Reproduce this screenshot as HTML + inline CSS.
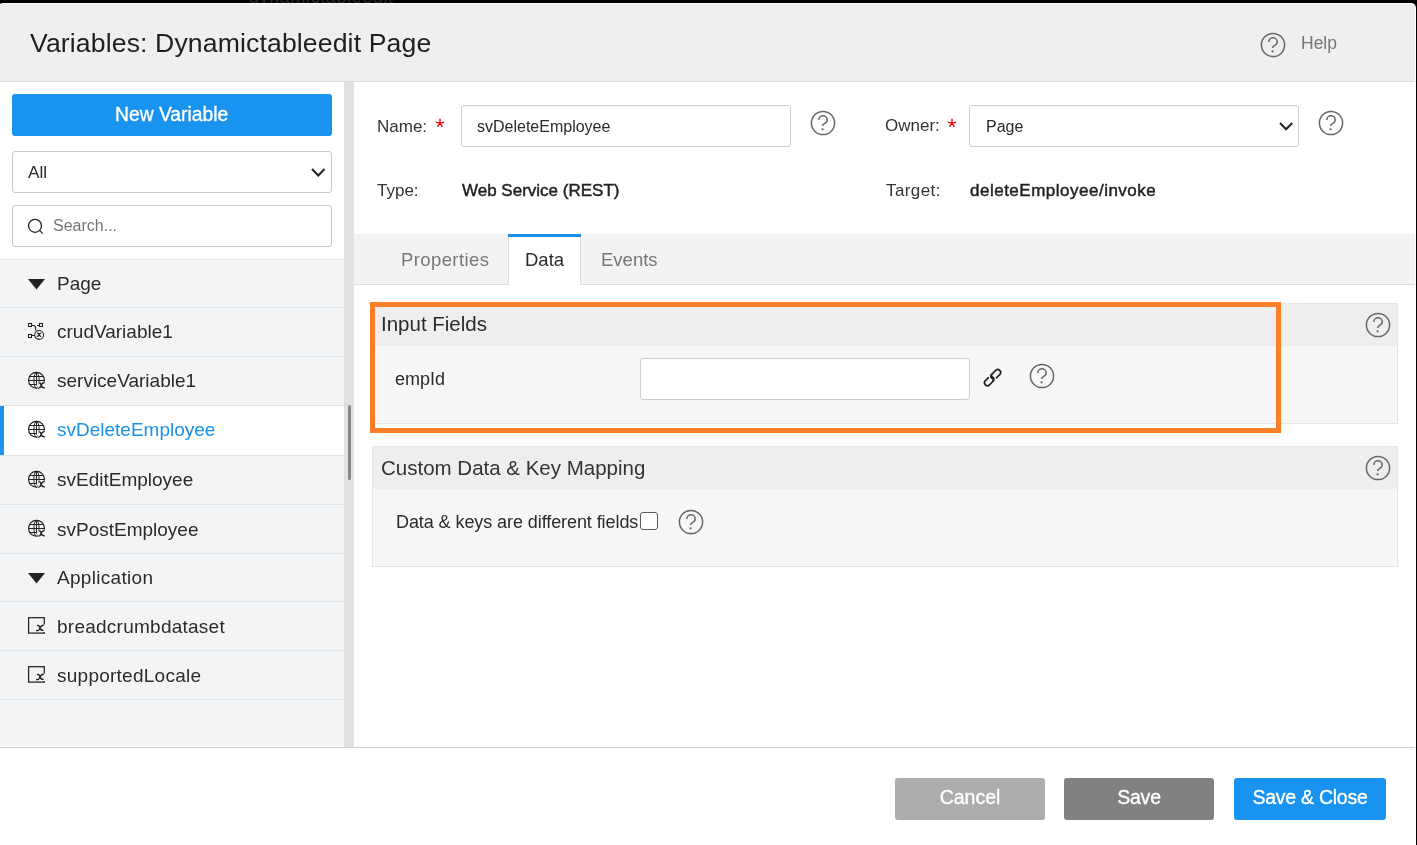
<!DOCTYPE html>
<html><head><meta charset="utf-8">
<style>
*{box-sizing:border-box;margin:0;padding:0}
html,body{width:1417px;height:845px;overflow:hidden;background:#000;font-family:"Liberation Sans",sans-serif;color:#333;-webkit-font-smoothing:antialiased}
.a{position:absolute}
.t{position:absolute;white-space:nowrap;line-height:1;will-change:transform}
.btn{position:absolute;border-radius:3px;color:#fff;text-align:center;line-height:1}
</style></head><body>
<div class="t" style="left:249px;top:-12px;font-size:18px;letter-spacing:0.6px;color:#2a2a2a">dynamictableedit</div>
<div class="a" style="left:-2px;top:3px;width:1418px;height:860px;background:#fff;border-radius:5px"></div>
<div class="a" style="left:-1px;top:4px;width:1416px;height:77px;background:#efefef;border-radius:4px 4px 0 0"></div>
<div class="a" style="left:0px;top:81px;width:1415px;height:1px;background:#dcdcdc"></div>
<div class="t" style="left:30.00px;top:30.28px;font-size:26.6px;color:#1f1f1f;font-weight:normal;letter-spacing:0.13px;">Variables: Dynamictableedit Page</div>
<svg class="a" style="left:1257.6px;top:29.9px" width="30" height="30" viewBox="0 0 30 30"><circle cx="15" cy="15" r="11.6" fill="none" stroke="#666" stroke-width="1.5"/><path d="M10.8 12 A4.2 4.2 0 0 1 19.2 12 C19.2 14.1 17.6 15 16 15.8 C14.9 16.4 14.6 16.8 14.6 18" fill="none" stroke="#666" stroke-width="1.5"/><circle cx="14.6" cy="21.3" r="1.15" fill="#666"/></svg>
<div class="t" style="left:1300.80px;top:34.89px;font-size:17.5px;color:#777;font-weight:normal;letter-spacing:0px;">Help</div>
<div class="a" style="left:0px;top:82px;width:344px;height:177px;background:#fff"></div>
<div class="a" style="left:0px;top:259px;width:344px;height:487px;background:#f3f4f6"></div>
<div class="a" style="left:344px;top:82px;width:10px;height:665px;background:#e1e1e1"></div>
<div class="a" style="left:348px;top:405px;width:3px;height:75px;background:#888;border-radius:2px"></div>
<div class="a" style="left:12px;top:94px;width:320px;height:42px;background:#1893ef;border-radius:3px"></div>
<div class="t" style="left:115.30px;top:104.56px;font-size:19.3px;color:#fff;font-weight:normal;letter-spacing:0px;-webkit-text-stroke:0.35px #fff">New Variable</div>
<div class="a" style="left:12px;top:151px;width:320px;height:42px;background:#fff;border:1px solid #c8c8c8;border-radius:3px"></div>
<div class="t" style="left:28.00px;top:164.24px;font-size:17.2px;color:#2b2b2b;font-weight:normal;letter-spacing:0px;">All</div>
<svg class="a" style="left:310px;top:166.5px" width="16.5" height="10.5" viewBox="0 0 16.5 10.5"><path d="M2 2 L8.25 8.5 L14.5 2" fill="none" stroke="#222" stroke-width="2"/></svg>
<div class="a" style="left:12px;top:205px;width:320px;height:42px;background:#fff;border:1px solid #c8c8c8;border-radius:3px"></div>
<svg class="a" style="left:27px;top:218px" width="18" height="18" viewBox="0 0 18 18"><circle cx="8" cy="7.8" r="6.5" fill="none" stroke="#222" stroke-width="1.3"/><path d="M12.6 12.4 L15.8 15.6" stroke="#222" stroke-width="1.3"/></svg>
<div class="t" style="left:53.00px;top:218.36px;font-size:16px;color:#757575;font-weight:normal;letter-spacing:0px;">Search...</div>
<div class="a" style="left:0px;top:259px;width:344px;height:1px;background:#dfe4e8"></div>
<svg class="a" style="left:28px;top:278.5px" width="18" height="11" viewBox="0 0 18 11"><path d="M0 0 H17 L8.5 10.5 Z" fill="#222"/></svg>
<div class="t" style="left:57.30px;top:274.12px;font-size:19px;color:#2b2b2b;font-weight:normal;letter-spacing:0px;">Page</div>
<div class="a" style="left:0px;top:307px;width:344px;height:1px;background:#dfe4e8"></div>
<svg class="a" style="left:22px;top:316.0px" width="30" height="30" viewBox="0 0 30 30">
<g fill="none" stroke="#222" stroke-width="1.05">
<rect x="6.5" y="7.5" width="3" height="3"/>
<rect x="17.5" y="7.5" width="3" height="3"/>
<rect x="6.5" y="18.5" width="3" height="3"/>
<path d="M10 9.5 H11.5 C13.2 9.5 13.7 10.8 13.7 12.6 V14.8"/>
<path d="M15 9.5 H17"/>
<path d="M10 19.5 H12.2"/>
<circle cx="17.1" cy="18.9" r="4.45"/>
</g>
<path d="M15.0 17.3 C15.9 16.9 16.6 17.3 16.9 18.4 C17.2 19.7 17.7 20.4 19.2 20.3 M19.3 17.1 C18.1 16.9 17.5 17.8 17.0 18.8 C16.6 19.9 16.0 20.6 14.7 20.4" fill="none" stroke="#222" stroke-width="1.3"/>
</svg>
<div class="t" style="left:57.30px;top:321.92px;font-size:19px;color:#2b2b2b;font-weight:normal;letter-spacing:0px;">crudVariable1</div>
<div class="a" style="left:0px;top:356px;width:344px;height:1px;background:#dfe4e8"></div>
<svg class="a" style="left:22px;top:365px" width="30" height="30" viewBox="0 0 30 30">
<circle cx="14.5" cy="15.25" r="7.95" fill="none" stroke="#222" stroke-width="1.15"/>
<path d="M6.6 15.5 H22.4 M7.9 11.5 H21.1 M7.6 19.5 H14.5 M14.5 7.3 V20.5" fill="none" stroke="#222" stroke-width="1.0"/>
<ellipse cx="14.5" cy="15.25" rx="2.6" ry="7.95" fill="none" stroke="#222" stroke-width="1.0"/>
<path d="M16 16.8 L23.2 16.8 L23.2 23.8 L15.5 23.8 Z" fill="#f3f4f6"/>
<path d="M16.4 18.1 C17.8 17.5 18.6 18.1 19.0 19.9 C19.4 22.1 20.2 23.1 22.8 22.9 M22.6 17.7 C20.6 17.4 19.6 18.9 19.0 20.7 C18.4 22.5 17.6 23.4 16.2 23.1" fill="none" stroke="#222" stroke-width="1.4"/>
</svg>
<div class="t" style="left:57.30px;top:371.22px;font-size:19px;color:#2b2b2b;font-weight:normal;letter-spacing:0px;">serviceVariable1</div>
<div class="a" style="left:0px;top:405px;width:344px;height:1px;background:#dfe4e8"></div>
<div class="a" style="left:0px;top:406px;width:344px;height:49px;background:#fff"></div>
<div class="a" style="left:0px;top:406px;width:4px;height:49px;background:#1893ef"></div>
<svg class="a" style="left:22px;top:414px" width="30" height="30" viewBox="0 0 30 30">
<circle cx="14.5" cy="15.25" r="7.95" fill="none" stroke="#222" stroke-width="1.15"/>
<path d="M6.6 15.5 H22.4 M7.9 11.5 H21.1 M7.6 19.5 H14.5 M14.5 7.3 V20.5" fill="none" stroke="#222" stroke-width="1.0"/>
<ellipse cx="14.5" cy="15.25" rx="2.6" ry="7.95" fill="none" stroke="#222" stroke-width="1.0"/>
<path d="M16 16.8 L23.2 16.8 L23.2 23.8 L15.5 23.8 Z" fill="#fff"/>
<path d="M16.4 18.1 C17.8 17.5 18.6 18.1 19.0 19.9 C19.4 22.1 20.2 23.1 22.8 22.9 M22.6 17.7 C20.6 17.4 19.6 18.9 19.0 20.7 C18.4 22.5 17.6 23.4 16.2 23.1" fill="none" stroke="#222" stroke-width="1.4"/>
</svg>
<div class="t" style="left:57.30px;top:420.42px;font-size:19px;color:#1a90e8;font-weight:normal;letter-spacing:0px;">svDeleteEmployee</div>
<div class="a" style="left:0px;top:455px;width:344px;height:1px;background:#dfe4e8"></div>
<svg class="a" style="left:22px;top:464px" width="30" height="30" viewBox="0 0 30 30">
<circle cx="14.5" cy="15.25" r="7.95" fill="none" stroke="#222" stroke-width="1.15"/>
<path d="M6.6 15.5 H22.4 M7.9 11.5 H21.1 M7.6 19.5 H14.5 M14.5 7.3 V20.5" fill="none" stroke="#222" stroke-width="1.0"/>
<ellipse cx="14.5" cy="15.25" rx="2.6" ry="7.95" fill="none" stroke="#222" stroke-width="1.0"/>
<path d="M16 16.8 L23.2 16.8 L23.2 23.8 L15.5 23.8 Z" fill="#f3f4f6"/>
<path d="M16.4 18.1 C17.8 17.5 18.6 18.1 19.0 19.9 C19.4 22.1 20.2 23.1 22.8 22.9 M22.6 17.7 C20.6 17.4 19.6 18.9 19.0 20.7 C18.4 22.5 17.6 23.4 16.2 23.1" fill="none" stroke="#222" stroke-width="1.4"/>
</svg>
<div class="t" style="left:57.30px;top:470.02px;font-size:19px;color:#2b2b2b;font-weight:normal;letter-spacing:0px;">svEditEmployee</div>
<div class="a" style="left:0px;top:504px;width:344px;height:1px;background:#dfe4e8"></div>
<svg class="a" style="left:22px;top:513px" width="30" height="30" viewBox="0 0 30 30">
<circle cx="14.5" cy="15.25" r="7.95" fill="none" stroke="#222" stroke-width="1.15"/>
<path d="M6.6 15.5 H22.4 M7.9 11.5 H21.1 M7.6 19.5 H14.5 M14.5 7.3 V20.5" fill="none" stroke="#222" stroke-width="1.0"/>
<ellipse cx="14.5" cy="15.25" rx="2.6" ry="7.95" fill="none" stroke="#222" stroke-width="1.0"/>
<path d="M16 16.8 L23.2 16.8 L23.2 23.8 L15.5 23.8 Z" fill="#f3f4f6"/>
<path d="M16.4 18.1 C17.8 17.5 18.6 18.1 19.0 19.9 C19.4 22.1 20.2 23.1 22.8 22.9 M22.6 17.7 C20.6 17.4 19.6 18.9 19.0 20.7 C18.4 22.5 17.6 23.4 16.2 23.1" fill="none" stroke="#222" stroke-width="1.4"/>
</svg>
<div class="t" style="left:57.30px;top:520.02px;font-size:19px;color:#2b2b2b;font-weight:normal;letter-spacing:0px;">svPostEmployee</div>
<div class="a" style="left:0px;top:553px;width:344px;height:1px;background:#dfe4e8"></div>
<svg class="a" style="left:28px;top:572.5px" width="18" height="11" viewBox="0 0 18 11"><path d="M0 0 H17 L8.5 10.5 Z" fill="#222"/></svg>
<div class="t" style="left:57.30px;top:568.02px;font-size:19px;color:#2b2b2b;font-weight:normal;letter-spacing:0.3px;">Application</div>
<div class="a" style="left:0px;top:601px;width:344px;height:1px;background:#dfe4e8"></div>
<svg class="a" style="left:22px;top:610.0px" width="30" height="30" viewBox="0 0 30 30">
<rect x="6.6" y="7.7" width="15.7" height="15.4" fill="none" stroke="#222" stroke-width="1.25"/>
<path d="M15 14.6 L23 14.6 L23 22.0 L14 22.0 Z" fill="#f3f4f6"/>
<path d="M15.0 15.6 C16.4 14.9 17.3 15.6 17.8 17.5 C18.3 19.7 19.1 20.6 21.6 20.4 M21.8 15.3 C19.7 15.0 18.5 16.7 17.8 18.4 C17.1 20.1 16.3 21.0 14.0 20.6" fill="none" stroke="#222" stroke-width="1.35"/>
</svg>
<div class="t" style="left:57.30px;top:616.62px;font-size:19px;color:#2b2b2b;font-weight:normal;letter-spacing:0.25px;">breadcrumbdataset</div>
<div class="a" style="left:0px;top:650px;width:344px;height:1px;background:#dfe4e8"></div>
<svg class="a" style="left:22px;top:659.0px" width="30" height="30" viewBox="0 0 30 30">
<rect x="6.6" y="7.7" width="15.7" height="15.4" fill="none" stroke="#222" stroke-width="1.25"/>
<path d="M15 14.6 L23 14.6 L23 22.0 L14 22.0 Z" fill="#f3f4f6"/>
<path d="M15.0 15.6 C16.4 14.9 17.3 15.6 17.8 17.5 C18.3 19.7 19.1 20.6 21.6 20.4 M21.8 15.3 C19.7 15.0 18.5 16.7 17.8 18.4 C17.1 20.1 16.3 21.0 14.0 20.6" fill="none" stroke="#222" stroke-width="1.35"/>
</svg>
<div class="t" style="left:57.30px;top:665.52px;font-size:19px;color:#2b2b2b;font-weight:normal;letter-spacing:0.25px;">supportedLocale</div>
<div class="a" style="left:0px;top:699px;width:344px;height:1px;background:#dfe4e8"></div>
<div class="t" style="left:377.40px;top:117.51px;font-size:17px;color:#333;font-weight:normal;letter-spacing:0px;">Name:</div>
<svg class="a" style="left:433.7px;top:116.6px" width="12" height="12" viewBox="0 0 12 12"><path d="M6 6 V2.2 M6 6.1 L2.5 5.4 M6 6.1 L9.6 5.4 M6 6 L3.8 9.3 M6 6 L8 9.3" fill="none" stroke="#f00" stroke-width="1.35" stroke-linecap="round"/></svg>
<div class="a" style="left:461px;top:105px;width:330px;height:42px;background:#fff;border:1px solid #cfcfcf;border-radius:3px"></div>
<div class="t" style="left:476.90px;top:119.16px;font-size:16px;color:#2b2b2b;font-weight:normal;letter-spacing:0px;">svDeleteEmployee</div>
<svg class="a" style="left:807.6px;top:108.0px" width="30" height="30" viewBox="0 0 30 30"><circle cx="15" cy="15" r="11.6" fill="none" stroke="#666" stroke-width="1.5"/><path d="M10.8 12 A4.2 4.2 0 0 1 19.2 12 C19.2 14.1 17.6 15 16 15.8 C14.9 16.4 14.6 16.8 14.6 18" fill="none" stroke="#666" stroke-width="1.5"/><circle cx="14.6" cy="21.3" r="1.15" fill="#666"/></svg>
<div class="t" style="left:884.70px;top:117.41px;font-size:17px;color:#333;font-weight:normal;letter-spacing:0px;">Owner:</div>
<svg class="a" style="left:945.9px;top:116.6px" width="12" height="12" viewBox="0 0 12 12"><path d="M6 6 V2.2 M6 6.1 L2.5 5.4 M6 6.1 L9.6 5.4 M6 6 L3.8 9.3 M6 6 L8 9.3" fill="none" stroke="#f00" stroke-width="1.35" stroke-linecap="round"/></svg>
<div class="a" style="left:969px;top:105px;width:330px;height:42px;background:#fff;border:1px solid #cfcfcf;border-radius:3px"></div>
<div class="t" style="left:985.60px;top:119.16px;font-size:16px;color:#2b2b2b;font-weight:normal;letter-spacing:0px;">Page</div>
<svg class="a" style="left:1277.5px;top:121px" width="16.2" height="10.3" viewBox="0 0 16.2 10.3"><path d="M2 2 L8.1 8.3 L14.2 2" fill="none" stroke="#222" stroke-width="2"/></svg>
<svg class="a" style="left:1315.6px;top:108.0px" width="30" height="30" viewBox="0 0 30 30"><circle cx="15" cy="15" r="11.6" fill="none" stroke="#666" stroke-width="1.5"/><path d="M10.8 12 A4.2 4.2 0 0 1 19.2 12 C19.2 14.1 17.6 15 16 15.8 C14.9 16.4 14.6 16.8 14.6 18" fill="none" stroke="#666" stroke-width="1.5"/><circle cx="14.6" cy="21.3" r="1.15" fill="#666"/></svg>
<div class="t" style="left:377.40px;top:181.61px;font-size:17px;color:#333;font-weight:normal;letter-spacing:0px;">Type:</div>
<div class="t" style="left:462.00px;top:181.51px;font-size:17px;color:#222;font-weight:normal;letter-spacing:0px;-webkit-text-stroke:0.45px #222">Web Service (REST)</div>
<div class="t" style="left:885.60px;top:181.61px;font-size:17px;color:#333;font-weight:normal;letter-spacing:0.4px;">Target:</div>
<div class="t" style="left:970.00px;top:181.61px;font-size:17px;color:#222;font-weight:normal;letter-spacing:0.5px;-webkit-text-stroke:0.45px #222">deleteEmployee/invoke</div>
<div class="a" style="left:354px;top:234px;width:1061px;height:50px;background:#f2f3f5"></div>
<div class="a" style="left:354px;top:284px;width:1061px;height:1px;background:#dddddd"></div>
<div class="a" style="left:508px;top:234px;width:73px;height:51px;background:#fff;border-left:1px solid #ddd;border-right:1px solid #ddd"></div>
<div class="a" style="left:508px;top:234px;width:73px;height:3px;background:#1a8fe8"></div>
<div class="t" style="left:400.90px;top:251.14px;font-size:18.5px;color:#777;font-weight:normal;letter-spacing:0.4px;">Properties</div>
<div class="t" style="left:524.90px;top:251.14px;font-size:18.5px;color:#2b2b2b;font-weight:normal;letter-spacing:0px;">Data</div>
<div class="t" style="left:601.00px;top:251.14px;font-size:18.5px;color:#777;font-weight:normal;letter-spacing:0px;">Events</div>
<div class="a" style="left:372px;top:303px;width:1026px;height:121px;background:#f7f7f7;border:1px solid #e6e6e6"></div>
<div class="a" style="left:372px;top:303px;width:1026px;height:43px;background:#eeeeee;border:1px solid #e6e6e6;border-bottom:none"></div>
<div class="t" style="left:380.60px;top:313.85px;font-size:20.5px;color:#2b2b2b;font-weight:normal;letter-spacing:0px;">Input Fields</div>
<svg class="a" style="left:1362.6px;top:309.8px" width="30" height="30" viewBox="0 0 30 30"><circle cx="15" cy="15" r="11.6" fill="none" stroke="#666" stroke-width="1.5"/><path d="M10.8 12 A4.2 4.2 0 0 1 19.2 12 C19.2 14.1 17.6 15 16 15.8 C14.9 16.4 14.6 16.8 14.6 18" fill="none" stroke="#666" stroke-width="1.5"/><circle cx="14.6" cy="21.3" r="1.15" fill="#666"/></svg>
<div class="t" style="left:395.10px;top:369.96px;font-size:18px;color:#2b2b2b;font-weight:normal;letter-spacing:0px;">empId</div>
<div class="a" style="left:640px;top:358px;width:330px;height:42px;background:#fff;border:1px solid #cfcfcf;border-radius:3px"></div>
<svg class="a" style="left:980px;top:365px" width="26" height="26" viewBox="0 0 26 26"><g transform="translate(12.6 12.6) rotate(-45)" fill="none" stroke-width="1.7"><path stroke="#222" d="M-2.6 -2.9 H-7.3 A2.9 2.9 0 0 0 -7.3 2.9 H-2.6 A2.9 2.9 0 0 0 -2.6 -2.9"/><path stroke="#f7f7f7" stroke-width="2.6" d="M-2.4 -2.9 H0.4"/><path stroke="#222" d="M2.0 2.9 H7.2 A2.9 2.9 0 0 0 7.2 -2.9 H2.0 A2.9 2.9 0 0 0 2.0 2.9"/><path stroke="#f7f7f7" stroke-width="2.6" d="M1.8 2.9 H-0.6"/><path stroke="#222" d="M-2.6 2.9 A2.9 2.9 0 0 0 0.3 0 M2.0 -2.9 A2.9 2.9 0 0 0 -0.9 0"/></g></svg>
<svg class="a" style="left:1026.5px;top:361.2px" width="30" height="30" viewBox="0 0 30 30"><circle cx="15" cy="15" r="11.6" fill="none" stroke="#666" stroke-width="1.5"/><path d="M10.8 12 A4.2 4.2 0 0 1 19.2 12 C19.2 14.1 17.6 15 16 15.8 C14.9 16.4 14.6 16.8 14.6 18" fill="none" stroke="#666" stroke-width="1.5"/><circle cx="14.6" cy="21.3" r="1.15" fill="#666"/></svg>
<div class="a" style="left:370px;top:302px;width:911px;height:131px;border:5px solid #fa7f28"></div>
<div class="a" style="left:372px;top:446px;width:1026px;height:121px;background:#f7f7f7;border:1px solid #e6e6e6"></div>
<div class="a" style="left:372px;top:446px;width:1026px;height:43px;background:#eeeeee;border:1px solid #e6e6e6;border-bottom:none"></div>
<div class="t" style="left:381.30px;top:457.75px;font-size:20.5px;color:#333;font-weight:normal;letter-spacing:0px;">Custom Data &amp; Key Mapping</div>
<svg class="a" style="left:1362.6px;top:452.9px" width="30" height="30" viewBox="0 0 30 30"><circle cx="15" cy="15" r="11.6" fill="none" stroke="#666" stroke-width="1.5"/><path d="M10.8 12 A4.2 4.2 0 0 1 19.2 12 C19.2 14.1 17.6 15 16 15.8 C14.9 16.4 14.6 16.8 14.6 18" fill="none" stroke="#666" stroke-width="1.5"/><circle cx="14.6" cy="21.3" r="1.15" fill="#666"/></svg>
<div class="t" style="left:396.30px;top:512.96px;font-size:18px;color:#2b2b2b;font-weight:normal;letter-spacing:-0.08px;">Data &amp; keys are different fields</div>
<div class="a" style="left:640px;top:512px;width:18px;height:18px;background:#fff;border:1.4px solid #5a5a5a;border-radius:3px"></div>
<svg class="a" style="left:676.0px;top:507.0px" width="30" height="30" viewBox="0 0 30 30"><circle cx="15" cy="15" r="11.6" fill="none" stroke="#666" stroke-width="1.5"/><path d="M10.8 12 A4.2 4.2 0 0 1 19.2 12 C19.2 14.1 17.6 15 16 15.8 C14.9 16.4 14.6 16.8 14.6 18" fill="none" stroke="#666" stroke-width="1.5"/><circle cx="14.6" cy="21.3" r="1.15" fill="#666"/></svg>
<div class="a" style="left:0px;top:747px;width:1415px;height:1px;background:#cfcfcf"></div>
<div class="btn" style="left:895px;top:778px;width:150px;height:42px;background:#adadad"></div>
<div class="t" style="left:895px;width:150px;text-align:center;top:787.69px;font-size:19.5px;letter-spacing:0px;color:#fff;-webkit-text-stroke:0.35px #fff">Cancel</div>
<div class="btn" style="left:1064px;top:778px;width:150px;height:42px;background:#818181"></div>
<div class="t" style="left:1064px;width:150px;text-align:center;top:787.69px;font-size:19.5px;letter-spacing:-0.2px;color:#fff;-webkit-text-stroke:0.35px #fff">Save</div>
<div class="btn" style="left:1234px;top:778px;width:152px;height:42px;background:#1893ef"></div>
<div class="t" style="left:1234px;width:152px;text-align:center;top:787.69px;font-size:19.5px;letter-spacing:-0.25px;color:#fff;-webkit-text-stroke:0.35px #fff">Save &amp; Close</div>
</body></html>
